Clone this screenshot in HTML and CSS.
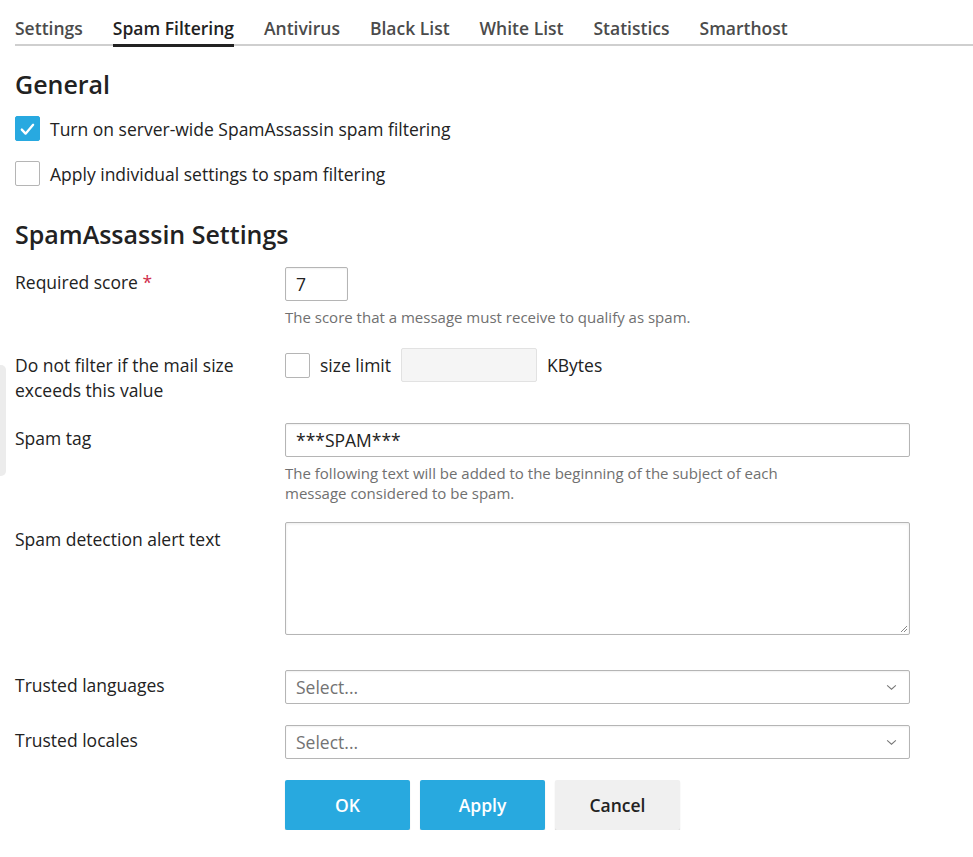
FILE: index.html
```html
<!DOCTYPE html>
<html>
<head>
<meta charset="utf-8">
<link rel="stylesheet" href="styles.css">
</head>
<body>
<div class="side-handle"></div>
<div class="page">
  <nav class="tabs">
    <span class="tab">Settings</span>
    <span class="tab active">Spam Filtering</span>
    <span class="tab">Antivirus</span>
    <span class="tab">Black List</span>
    <span class="tab">White List</span>
    <span class="tab">Statistics</span>
    <span class="tab">Smarthost</span>
  </nav>

  <h2 class="section-title first">General</h2>
  <label class="check-row">
    <span class="cb checked"><svg viewBox="0 0 25 25" width="25" height="25"><path d="M6.3 12.6 L10.4 17 L18.6 7.4" fill="none" stroke="#fff" stroke-width="2.5" stroke-linecap="round" stroke-linejoin="round"/></svg></span>
    <span>Turn on server-wide SpamAssassin spam filtering</span>
  </label>
  <label class="check-row">
    <span class="cb"></span>
    <span>Apply individual settings to spam filtering</span>
  </label>

  <h2 class="section-title">SpamAssassin Settings</h2>

  <div class="form-row row-score">
    <div class="label">Required score <span class="req">*</span></div>
    <div class="field">
      <div class="input small">7</div>
      <div class="hint">The score that a message must receive to qualify as spam.</div>
    </div>
  </div>

  <div class="form-row row-size">
    <div class="label">Do not filter if the mail size exceeds this value</div>
    <div class="field inline">
      <span class="cb"></span>
      <span class="inline-text">size limit</span>
      <div class="input disabled"></div>
      <span class="inline-text">KBytes</span>
    </div>
  </div>

  <div class="form-row row-tag">
    <div class="label">Spam tag</div>
    <div class="field">
      <div class="input wide">***SPAM***</div>
      <div class="hint">The following text will be added to the beginning of the subject of each message considered to be spam.</div>
    </div>
  </div>

  <div class="form-row row-alert">
    <div class="label">Spam detection alert text</div>
    <div class="field">
      <div class="textarea">
        <svg class="grip" viewBox="0 0 8 8" width="8" height="8"><path d="M7 1 L1 7 M7 4 L4 7" stroke="#888" stroke-width="1"/></svg>
      </div>
    </div>
  </div>

  <div class="form-row row-select">
    <div class="label">Trusted languages</div>
    <div class="field">
      <div class="input wide select"><span class="placeholder">Select...</span>
        <svg viewBox="0 0 12 8" width="11" height="7"><path d="M1 1.5 L6 6 L11 1.5" fill="none" stroke="#777" stroke-width="1.2"/></svg>
      </div>
    </div>
  </div>

  <div class="form-row row-select2">
    <div class="label">Trusted locales</div>
    <div class="field">
      <div class="input wide select"><span class="placeholder">Select...</span>
        <svg viewBox="0 0 12 8" width="11" height="7"><path d="M1 1.5 L6 6 L11 1.5" fill="none" stroke="#777" stroke-width="1.2"/></svg>
      </div>
    </div>
  </div>

  <div class="buttons">
    <button class="btn primary">OK</button>
    <button class="btn primary">Apply</button>
    <button class="btn">Cancel</button>
  </div>
</div>
</body>
</html>
```

FILE: styles.css
```css
html, body {
  margin: 0;
  padding: 0;
  background: #fff;
}
body {
  font-family: "Open Sans", "Liberation Sans", sans-serif;
  font-size: 17.5px;
  color: #222;
  position: relative;
}
.side-handle {
  position: absolute;
  left: 0;
  top: 365px;
  width: 6px;
  height: 111px;
  background: #ececec;
  border-radius: 0 5px 5px 0;
}
.page {
  padding: 0 0 0 15px;
}
.tabs {
  display: flex;
  gap: 30px;
  padding-top: 14px;
  border-bottom: 2px solid #cfcfcf;
  height: 30px;
}
.tab {
  font-size: 17.5px;
  font-weight: 600;
  color: #4b4b4b;
  line-height: 28px;
  height: 30px;
  box-sizing: border-box;
  white-space: nowrap;
}
.tab.active {
  color: #222;
  border-bottom: 3px solid #222;
  margin-bottom: -2px;
  height: 33px;
}
.section-title {
  font-size: 25px;
  font-weight: 600;
  margin: 0;
  line-height: 32px;
  color: #222;
}
.section-title.first {
  margin-top: 22px;
  margin-bottom: 16px;
}
.section-title:not(.first) {
  margin-top: 32px;
  margin-bottom: 17px;
}
.check-row {
  display: flex;
  align-items: center;
  gap: 10px;
  height: 25px;
  margin-bottom: 20px;
  font-size: 17.5px;
}
.check-row:last-of-type { margin-bottom: 0; }
.cb {
  width: 25px;
  height: 25px;
  box-sizing: border-box;
  border: 1px solid #b5b5b5;
  border-radius: 2px;
  background: #fff;
  flex: none;
  display: inline-flex;
}
.cb.checked {
  background: #28a9e0;
  border-color: #28a9e0;
}
.form-row {
  display: flex;
  align-items: flex-start;
}
.label {
  width: 270px;
  flex: none;
  font-size: 17.5px;
  line-height: 25px;
  padding-top: 3px;
  padding-right: 20px;
  box-sizing: border-box;
}
.req { color: #d02d4c; }
.field { flex: none; }
.input {
  box-sizing: border-box;
  height: 34px;
  border: 1px solid #b5b5b5;
  border-radius: 2px;
  padding: 0 10px;
  font-size: 17.5px;
  line-height: 32px;
  box-shadow: inset 0 1px 2px rgba(0,0,0,0.06);
  background: #fff;
}
.input.small { width: 63px; }
.input.wide { width: 625px; }
.input.disabled {
  width: 136px;
  background: #f5f5f5;
  border-color: #e2e2e2;
  box-shadow: none;
}
.hint {
  font-size: 15px;
  color: #707070;
  line-height: 20px;
  margin-top: 6px;
  max-width: 530px;
}
.row-size { margin-top: 21px; }
.row-size .label { padding-top: 5px; }
.field.inline {
  display: flex;
  align-items: center;
  height: 34px;
  gap: 10px;
}
.field.inline .inline-text { font-size: 17.5px; }
.row-tag { margin-top: 20px; }
.row-alert { margin-top: 19px; }
.row-alert .label { padding-top: 5px; }
.textarea {
  position: relative;
  width: 625px;
  height: 113px;
  box-sizing: border-box;
  border: 1px solid #b5b5b5;
  border-radius: 2px;
  box-shadow: inset 0 1px 3px rgba(0,0,0,0.08);
}
.grip {
  position: absolute;
  right: 1px;
  bottom: 1px;
}
.row-select { margin-top: 35px; }
.row-select2 { margin-top: 21px; }
.select {
  display: flex;
  align-items: center;
  justify-content: space-between;
  padding-right: 12px;
}
.placeholder { color: #737373; }
.buttons {
  display: flex;
  gap: 10px;
  margin-left: 270px;
  margin-top: 21px;
}
.btn {
  width: 125px;
  height: 50px;
  border: 0;
  border-radius: 2px;
  font-family: "Open Sans", "Liberation Sans", sans-serif;
  font-size: 17.5px;
  font-weight: 600;
  color: #222;
  background: #f0f0f0;
  box-shadow: 0 1px 1px rgba(0,0,0,0.2);
}
.btn.primary {
  background: #28a9df;
  color: #fff;
}
```
